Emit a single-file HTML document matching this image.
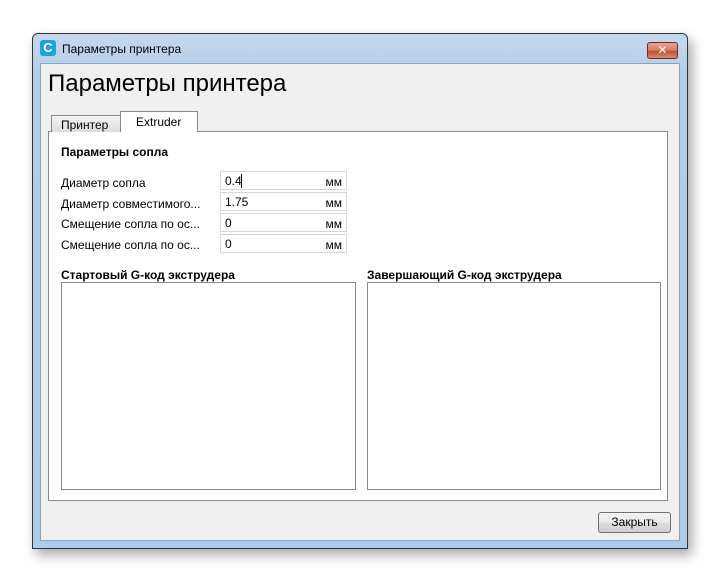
<!DOCTYPE html><html><head><meta charset="utf-8"><style>
*{box-sizing:border-box}body{margin:0;width:720px;height:582px;background:#fff;font-family:"Liberation Sans","DejaVu Sans",sans-serif;position:relative;overflow:hidden}
.a{position:absolute}
.win{left:32px;top:33px;width:656px;height:516px;border:1px solid #333;border-radius:6px 6px 0 0;background:linear-gradient(#c5d9ef,#b4cde8 40px,#aecbe9);box-shadow:4px 6px 12px rgba(0,0,0,.35)}
.client{left:40px;top:63px;width:640px;height:478px;background:#f0f0f0;border:1px solid #8aa4c0}
.f{font-size:12px;color:#000}
.inp{position:absolute;left:220px;width:127px;height:19px;background:#fff;border:1px solid #d6d6d6;font-size:12px;padding:2px 0 0 4px}
.inp span{position:absolute;right:4px;top:3px}
.ta{position:absolute;top:282px;height:208px;background:#fff;border:1px solid #8a8a8a}
</style></head><body>
<div class="a win"></div>
<div class="a" style="left:40px;top:40px;width:16px;height:16px;background:#1aa3dc;border-radius:3px;color:#fff;font-weight:bold;font-size:13px;line-height:16px;text-align:center">C</div>
<div class="a f" style="left:62px;top:42px">Параметры принтера</div>
<div class="a" style="left:647px;top:42px;width:31px;height:17px;border:1px solid #6b2b22;border-radius:3px;background:linear-gradient(#e9a595,#d47a64 50%,#c0502f 55%,#d88a70);color:#fff;font-weight:bold;font-size:12px;text-align:center;line-height:15px">✕</div>
<div class="a client"></div>
<div class="a" style="left:48px;top:70px;font-size:24px">Параметры принтера</div>
<div class="a" style="left:48px;top:131px;width:620px;height:370px;background:#fff;border:1px solid #8a8a8a"></div>
<div class="a f" style="left:51px;top:115px;width:70px;height:17px;background:linear-gradient(#f4f4f4,#dcdcdc);border:1px solid #8a8a8a;border-bottom:none;padding:2px 0 0 9px">Принтер</div>
<div class="a f" style="left:120px;top:111px;width:78px;height:21px;background:#fff;border:1px solid #8a8a8a;border-bottom:none;padding:3px 0 0 15px">Extruder</div>
<div class="a f" style="left:61px;top:145px;font-weight:bold">Параметры сопла</div>
<div class="a f" style="left:61px;top:176px">Диаметр сопла</div>
<div class="a f" style="left:61px;top:197px">Диаметр совместимого...</div>
<div class="a f" style="left:61px;top:217px">Смещение сопла по ос...</div>
<div class="a f" style="left:61px;top:238px">Смещение сопла по ос...</div>
<div class="inp" style="top:171px">0.4<span>мм</span></div>
<div class="a" style="left:241px;top:174px;width:1px;height:14px;background:#000"></div>
<div class="inp" style="top:192px">1.75<span>мм</span></div>
<div class="inp" style="top:213px">0<span>мм</span></div>
<div class="inp" style="top:234px">0<span>мм</span></div>
<div class="a f" style="left:61px;top:268px;font-weight:bold">Стартовый G-код экструдера</div>
<div class="a f" style="left:367px;top:268px;font-weight:bold">Завершающий G-код экструдера</div>
<div class="ta" style="left:61px;width:295px"></div>
<div class="ta" style="left:367px;width:294px"></div>
<div class="a f" style="left:598px;top:512px;width:73px;height:21px;border:1px solid #707070;border-radius:3px;background:linear-gradient(#f2f2f2,#ebebeb 50%,#dddddd 51%,#cfcfcf);text-align:center;line-height:19px">Закрыть</div>
</body></html>
